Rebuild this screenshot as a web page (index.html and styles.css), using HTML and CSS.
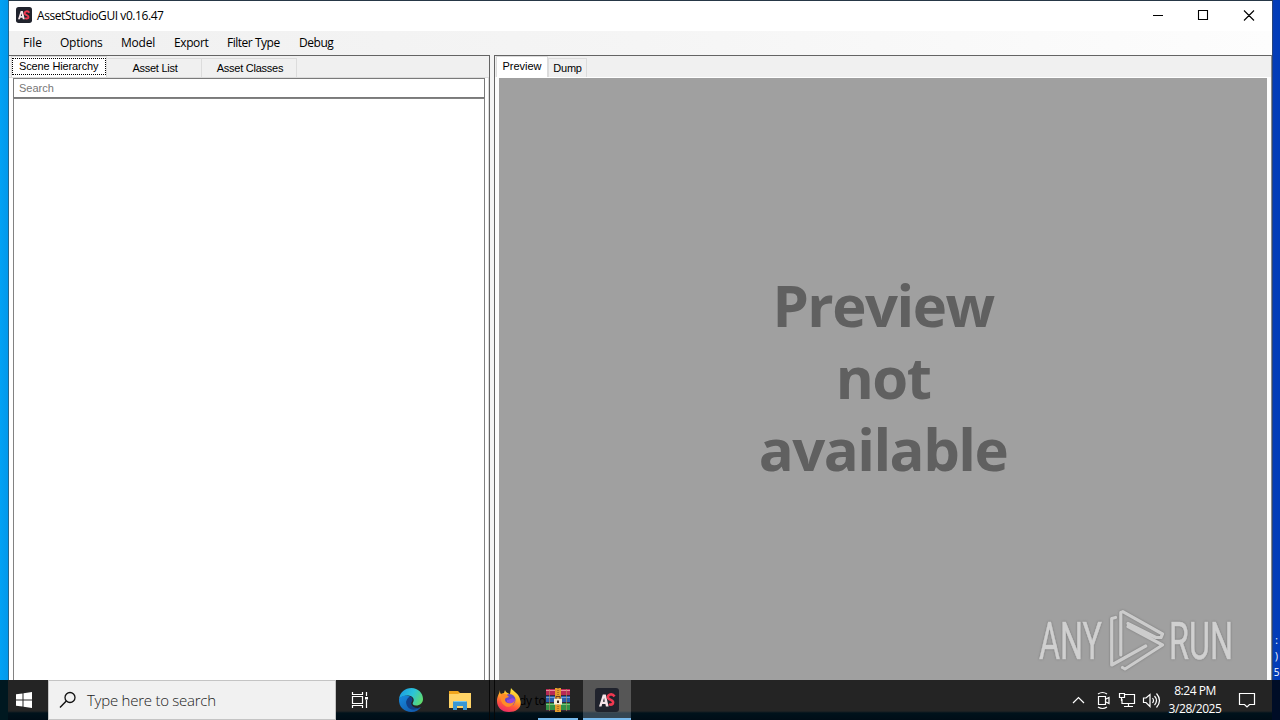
FILE: index.html
```html
<!DOCTYPE html>
<html lang="en">
<head>
    <meta charset="UTF-8">
    <meta name="viewport" content="width=device-width, initial-scale=1.0">
    <title>AssetStudioGUI v0.16.47</title>
    <link rel="stylesheet" href="styles.css">
</head>
<body>

<div class="desktop">
    <div class="desktop-labels"><span>:</span><span>)</span><span>5</span></div>

    <div class="window">
        <div class="titlebar">
            <svg class="app-icon" width="16" height="16" viewBox="0 0 24 24">
                <rect width="24" height="24" rx="4" fill="#20232d"/>
                <path d="M3 18.500 7 6h3.200l3 12.500h-3l-.5-2.500H6.600l-.7 2.500zM7.200 13.500H9L8.400 9.500z" fill="#f4e4e8"/>
                <path d="M20 8.500Q18.500 6 15.500 6.500q-3 .8-2.500 3.500.5 1.500 3.500 2.600 3.200 1.500 1.800 4-2 1.600-4.500-.2" fill="none" stroke="#ef3850" stroke-width="2.800"/>
            </svg>
            <span class="title">AssetStudioGUI v0.16.47</span>
            <svg class="controls" width="138" height="30" viewBox="0 0 138 30">
                <path d="M19 14.500h10M64.500 9.500h9v9h-9zM110 9.500l10 10M120 9.500l-10 10" fill="none" stroke="#000" stroke-width="1.100"/>
            </svg>
        </div>

        <div class="menu">
            <span class="m-file">File</span>
            <span class="m-options">Options</span>
            <span class="m-model">Model</span>
            <span class="m-export">Export</span>
            <span class="m-filter">Filter Type</span>
            <span class="m-debug">Debug</span>
        </div>

        <div class="panes">
            <div class="left-pane">
                <div class="tabs">
                    <div class="tab active focused"><span>Scene Hierarchy</span></div>
                    <div class="tab wide">Asset List</div>
                    <div class="tab wide">Asset Classes</div>
                </div>
                <div class="tab-page">
                    <div class="search">Search</div>
                    <div class="tree"></div>
                </div>
            </div>
            <div class="splitter"></div>
            <div class="right-pane">
                <div class="tabs">
                    <div class="tab active preview-tab">Preview</div>
                    <div class="tab dump-tab">Dump</div>
                </div>
                <div class="preview">
                    <div class="preview-text">Preview<br>not<br>available</div>
                    <svg class="watermark" width="200" height="66" viewBox="0 0 200 66">
                        <g class="mark-text">
                            <text x="3" y="51" textLength="63" lengthAdjust="spacingAndGlyphs">ANY</text>
                            <text x="133" y="51" textLength="64" lengthAdjust="spacingAndGlyphs">RUN</text>
                        </g>
                        <path d="M79.500 9.500l-3.800 1V57l34-19M84.800 47V4.500l2-.8L126.500 26l-1.500 3.500-5 0L92 15.500M92 18.500l34.500 18.500L89 61l-2.500-1.500" fill="none" stroke="#cccccc" stroke-width="3.200" stroke-linejoin="round" stroke-linecap="round"/>
                    </svg>
                </div>
            </div>
        </div>
    </div>

    <div class="taskbar">
        <div class="start">
            <svg width="16" height="16" viewBox="0 0 16 16"><path d="M0 2.300 6.500 1.400v6.100H0zM7.500 1.200 16 0v7.500H7.500zM0 8.500h6.500v6.100L0 13.700zM7.500 8.500H16V16l-8.500-1.200z" fill="#fff"/></svg>
        </div>
        <div class="search-box">
            <svg width="18" height="18" viewBox="0 0 18 18"><circle cx="11" cy="6.500" r="5" fill="none" stroke="#111" stroke-width="1.300"/><path d="M7.300 10 1 16.500" stroke="#111" stroke-width="1.400"/></svg>
            <span>Type here to search</span>
        </div>
        <div class="task">
            <svg width="18" height="18" viewBox="0 0 18 18"><path d="M1.500 1v2.500h10V1M1.500 17v-2.500h10V17M1.500 5.500h10v7h-10zM15.500 1v4M15.500 9v8" fill="none" stroke="#fff" stroke-width="1.200"/><path d="M14 6h3v2.500h-3z" fill="#fff"/></svg>
        </div>
        <div class="task edge">
            <svg width="26" height="26" viewBox="0 0 26 26">
                <defs>
                    <linearGradient id="edge-top" x1="0" x2="1" y1=".3" y2=".7"><stop offset="0" stop-color="#1b9de2"/><stop offset=".5" stop-color="#2bc4d9"/><stop offset="1" stop-color="#62dc68"/></linearGradient>
                    <linearGradient id="edge-low" x1="0" x2="1" y1="0" y2="1"><stop offset="0" stop-color="#168be0"/><stop offset="1" stop-color="#1252a3"/></linearGradient>
                </defs>
                <path d="M1 12C2 5 7 1 13.500 1 20 1 25 6 25 12c0 4-3 6.500-7 6.500-3 0-4-1.500-3-3 2-3 0-7-5-7-4 0-7 1.500-9 3.500z" fill="url(#edge-top)"/>
                <path d="M1 12c2-4 10-5 13-.5-4-1-6 2-5 5.500 1.500 5 8 6.500 14 3-2 3-5.500 5-9.500 5C6.500 25 .500 20 1 12z" fill="url(#edge-low)"/>
                <path d="M12 9.500c-3.500 2-5 6-2.500 10 2.500 4 8 4 13 1-4 1-8 0-9-3-1-2 1-3 1-5 0-1-1-2.500-2.500-3z" fill="#123f87"/>
            </svg>
        </div>
        <div class="task">
            <svg class="folder" width="22" height="20" viewBox="0 0 22 20">
                <path d="M0 1h9l2 2h11v15H0z" fill="#f0a51c"/>
                <path d="M0 4h9l2-1h11v15H0z" fill="#ffd366"/>
                <path d="M4 20v-8l1-1h12l1 1v8h-4v-4H8v4z" fill="#3897d3"/>
                <path d="M5 11.500h12" stroke="#77c8ed"/>
            </svg>
        </div>
        <div class="task">
            <svg width="26" height="26" viewBox="0 0 26 26">
                <defs>
                    <linearGradient id="fire" x1=".7" x2=".3" y1="0" y2="1"><stop offset="0" stop-color="#fff044"/><stop offset=".4" stop-color="#ffad25"/><stop offset=".7" stop-color="#ff573c"/><stop offset="1" stop-color="#ee2869"/></linearGradient>
                </defs>
                <path d="M4 3c0 2 0 3 1 4l3-1 1-3c1 3 3 3 5 4l1-6c2 3 8 6 9 11 3 8-3 13-11 13C5 25 1 20 1 14c0-5 2-6 3-11z" fill="url(#fire)"/>
                <circle cx="13.500" cy="13" r="6" fill="#6948c7"/>
                <path d="M5 7c3-1 6 0 8 3l-3 1c-2 1-1 4 2 5 3 1 5-1 7-3-1 6-7 9-11 5-3-2-4-7-3-11z" fill="#ff8c28"/>
                <path d="M11 13c3 0 4-3 8-1-1 5-5 5-8 3z" fill="#9746dc"/>
            </svg>
        </div>
        <div class="task running">
            <svg width="26" height="24" viewBox="0 0 26 24">
                <path d="M1 1h24v7H1z" fill="#b82956"/><path d="M1 8h24v7H1z" fill="#285ca7"/><path d="M1 15h24v8H1z" fill="#319146"/>
                <path d="M1 2.500h24" stroke="#e9899c"/><path d="M1 9.500h24" stroke="#6d9bd8"/><path d="M1 16.500h24" stroke="#79c47c"/><path d="M1 7.500h24M1 14.500h24M1 22.500h24" stroke="#382839"/>
                <path d="M4.500 1v22M21.500 1v22" stroke="#b98f56" stroke-opacity=".6"/>
                <path d="M10 0h6v24h-6z" fill="#e39b2b"/><path d="M13 0v24" stroke="#764522" stroke-dasharray="1 1"/>
                <path d="M9 10.500h8v6H9z" fill="#f7efdb"/><path d="M11 11V8.500h4V11" fill="none" stroke="#6b3b22"/><path d="M12 12.500h2v2.500h-2z" fill="#332820"/>
            </svg>
        </div>
        <div class="task running selected">
            <svg width="24" height="24" viewBox="0 0 24 24">
                <rect width="24" height="24" rx="3" fill="#20232d"/>
                <path d="M4 18.500 7.800 6.500h3l2.800 12h-2.700l-.5-2.500H7.200l-.7 2.500zM7.900 13.700h1.900L9.100 9.700z" fill="#f4e4e8"/>
                <path d="M19.500 8.500Q18 6 15.300 6.500q-3 .8-2.300 3.200.5 1.300 3.200 2.400 2.800 1.400 1.500 3.700-1.700 1.600-3.700.2" fill="none" stroke="#ef3850" stroke-width="2.600"/>
            </svg>
        </div>
        <div class="tray">
            <svg width="94" height="24" viewBox="0 0 94 24" fill="none" stroke="#fff" stroke-width="1.200">
                <path d="M4 15l5.500-5.500L15 15"/>
                <path d="M29.500 8.500h7v8h-7zM37 11l3-1.500v6L37 14M29 6q4.500-3 9 0M29 19q4.500 3 9 0"/>
                <path d="M56 6.500h9.500v9H53V11M59.500 16v3M55 18.500h9M50.500 5.500h5v4h-5zM52.500 10v3"/>
                <path d="M74.500 10v4.500H77l4 4v-12l-4 3.500zM83.500 10q2 2.500 0 5M85.500 8q4 4.500 0 9M87.500 5.500q6 7 0 14"/>
            </svg>
            <div class="clock"><span>8:24 PM</span><span>3/28/2025</span></div>
            <svg class="notice" width="18" height="18" viewBox="0 0 18 18"><path d="M1.500 2.500h15v11h-5L9 16l-2.500-2.500h-5z" fill="none" stroke="#fff" stroke-width="1.200"/></svg>
        </div>
        <div class="status">Ready to go</div>
    </div>
</div>

</body>
</html>
```

FILE: styles.css
```css
* {
    box-sizing: border-box;
}
body {
    margin: 0;
    overflow: hidden;
    font-family: "Open Sans", "Noto Sans", sans-serif;
    color: #000;
}
.desktop {
    position: relative;
    width: 1280px;
    height: 720px;
    padding: 0 7px 0 8px;
    background: linear-gradient(90deg, #00a2f5 0, #0098eb 8px, #063db6 1272px, #003cba);
}
.desktop-labels {
    position: absolute;
    right: 0;
    top: 632px;
    display: flex;
    flex-direction: column;
    align-items: center;
    width: 7px;
    color: #fff;
    font-size: 10px;
    line-height: 16px;
}
.window {
    display: flex;
    flex-direction: column;
    height: 712px;
    border-top: 1px solid #263746;
    border-right: 1px solid #28457b;
    border-left: 1px solid #25658c;
    background: #f0f0f0;
}
.titlebar {
    display: flex;
    align-items: center;
    height: 30px;
    padding-left: 7px;
    background: #fff;
}
.app-icon {
    margin-bottom: 2px;
}
.title {
    margin: 0 0 2px 5px;
    font-size: 12px;
    letter-spacing: -0.43px;
}
.controls {
    margin-left: auto;
}
.menu {
    display: flex;
    align-items: center;
    height: 24px;
    padding: 0 0 1px 14px;
    background: linear-gradient(90deg, #f0f0f0, #f5f5f5 50%, #fdfdfd);
    font-size: 12px;
    white-space: nowrap;
}
.m-file {
    width: 37px;
}
.m-options {
    width: 61px;
    letter-spacing: -0.25px;
}
.m-model {
    width: 53px;
    letter-spacing: -0.2px;
}
.m-export {
    width: 53px;
    letter-spacing: -0.4px;
}
.m-filter {
    width: 72px;
    letter-spacing: -0.48px;
}
.m-debug {
    letter-spacing: -0.45px;
}
.panes {
    display: flex;
    flex: 1;
    min-height: 0;
}
.left-pane {
    display: flex;
    flex-direction: column;
    width: 481px;
    border-top: 1px solid #646464;
    border-right: 1px solid #646464;
}
.splitter {
    width: 4px;
    background: #f4f4f4;
}
.right-pane {
    display: flex;
    flex: 1;
    flex-direction: column;
    border-top: 1px solid #646464;
    border-left: 1px solid #646464;
    border-right: 1px solid #8b8b8b;
}
.tabs {
    display: flex;
    align-items: flex-end;
    height: 21px;
    padding-left: 2px;
    font-family: "Liberation Sans", sans-serif;
    font-size: 11px;
}
.tab {
    display: flex;
    align-items: center;
    justify-content: center;
    height: 19px;
    border: 1px solid #dcdcdc;
    border-bottom: none;
    white-space: nowrap;
}
.tab.wide {
    width: 95px;
    padding-left: 2px;
    border-left: none;
    letter-spacing: -0.25px;
}
.active {
    height: 21px;
    background: #fff;
}
.focused {
    align-items: flex-start;
    width: 96px;
    padding: 1px 0;
}
.focused span {
    width: 94px;
    height: 17px;
    padding: 0 0 0 6px;
    border: 1px dotted #000;
    line-height: 14px;
    letter-spacing: -0.13px;
}
.preview-tab {
    width: 52px;
    margin-left: -1px;
    padding-bottom: 2px;
}
.dump-tab {
    width: 39px;
    letter-spacing: -0.2px;
}
.tab-page {
    display: flex;
    flex: 1;
    flex-direction: column;
    padding: 0 3px 0 4px;
    border-top: 1px solid #dcdcdc;
    border-right: 1px solid #dcdcdc;
    background: #fff;
}
.search {
    height: 20px;
    padding-left: 5px;
    border: 1px solid #7a7a7a;
    color: #777;
    font-family: "Liberation Sans", sans-serif;
    font-size: 11px;
    line-height: 18px;
}
.tree {
    flex: 1;
    border: 1px solid #828282;
}
.preview {
    position: relative;
    display: flex;
    flex: 1;
    justify-content: center;
    border: 4px solid #fcfcfc;
    border-top: 1px solid #fff;
    border-bottom: none;
    background: #a0a0a0;
}
.preview-text {
    padding-top: 191px;
    color: #606060;
    font-family: "Open Sans", sans-serif;
    font-size: 58px;
    font-weight: 700;
    line-height: 72px;
    letter-spacing: -1.5px;
    text-align: center;
}
.watermark {
    position: absolute;
    left: 537px;
    top: 530px;
    filter: drop-shadow(0 0 1px #777);
}
.mark-text {
    fill: #d0d0d0;
    stroke: #d0d0d0;
    stroke-width: 0.6px;
    font-family: Roboto, sans-serif;
    font-size: 51px;
}
.taskbar {
    position: absolute;
    left: 0;
    bottom: 0;
    z-index: 1;
    display: flex;
    width: 1280px;
    height: 40px;
    background: linear-gradient(90deg, #001820 8px, transparent 8px, transparent 1272px, #000d26 1272px),
        linear-gradient(90deg, transparent 489px, #080808 489px, #080808 490px, transparent 490px, transparent 494px, #080808 494px, #080808 495px, transparent 495px),
        linear-gradient(#242424 31px, #00121b 33px, #000d17);
}
.start,
.task {
    position: relative;
    z-index: 1;
    display: flex;
    align-items: center;
    justify-content: center;
    width: 48px;
}
.task {
    margin-right: 1px;
}
.search-box {
    display: flex;
    align-items: center;
    width: 288px;
    padding-left: 10px;
    border: 1px solid #c4c4c4;
    background: #f1f1f1;
    color: #222;
    font-size: 15px;
    font-weight: 300;
}
.search-box span {
    margin-left: 10px;
    letter-spacing: -0.25px;
}
.edge {
    margin-left: 2px;
}
.running::after {
    position: absolute;
    left: 4px;
    right: 4px;
    bottom: 0;
    height: 2px;
    background: #76b9ed;
    content: "";
}
.selected {
    background: linear-gradient(#565656 31px, #344552 33px);
}
.selected::after {
    left: 0;
    right: 0;
}
.status {
    position: absolute;
    left: 499px;
    top: 13px;
    color: #000;
    font-size: 12px;
    line-height: 16px;
    letter-spacing: -0.3px;
    white-space: nowrap;
}
.tray {
    display: flex;
    align-items: center;
    margin-left: auto;
    padding-right: 24px;
}
.clock {
    display: flex;
    flex-direction: column;
    align-items: center;
    width: 70px;
    margin: 0 8px 0 -3px;
    color: #fff;
    font-size: 12px;
    line-height: 18px;
    letter-spacing: -0.45px;
}
```
